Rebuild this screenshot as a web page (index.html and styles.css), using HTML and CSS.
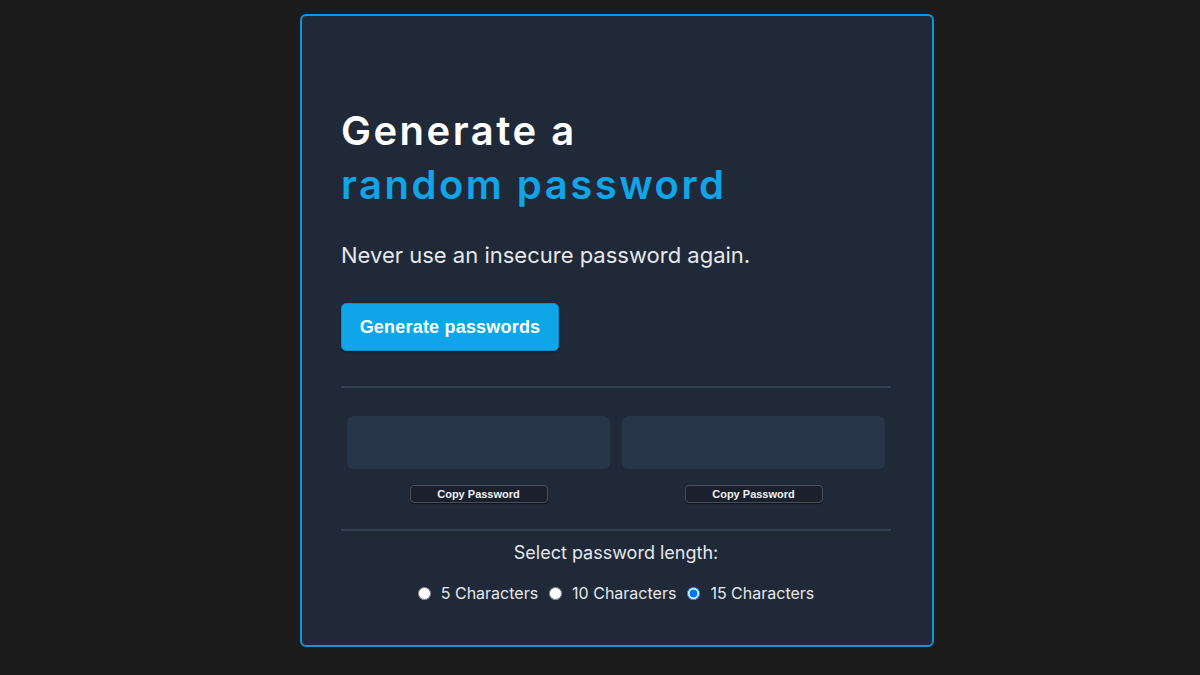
FILE: index.html
```html
<!DOCTYPE html>
<html lang="en">
<head>
    <meta charset="UTF-8">
    <meta name="viewport" content="width=device-width, initial-scale=1.0">
    <title>Password Generator</title>
    <link rel="stylesheet" href="styles.css">
</head>
<body>
    <div class="card">
        <h1 class="title">Generate a<br><span class="accent">random password</span></h1>
        <p class="subtitle">Never use an insecure password again.</p>
        <button class="generate" id="generate">Generate passwords</button>
        <hr class="divider">
        <div class="passwords">
            <div class="slot">
                <div class="pw-box" id="pw1"></div>
                <button class="copy">Copy Password</button>
            </div>
            <div class="slot">
                <div class="pw-box" id="pw2"></div>
                <button class="copy">Copy Password</button>
            </div>
        </div>
        <hr class="divider">
        <div class="length">
            <p class="length-label">Select password length:</p>
            <div class="options">
                <label><input type="radio" name="len" value="5">5 Characters</label>
                <label><input type="radio" name="len" value="10">10 Characters</label>
                <label><input type="radio" name="len" value="15" checked>15 Characters</label>
            </div>
        </div>
    </div>
</body>
</html>
```

FILE: styles.css
```css
*{
    margin: 0;
    padding: 0;
    box-sizing: border-box;
}
body{
    background: #1b1b1b;
    font-family: Inter, "Noto Sans", sans-serif;
}
.card{
    width: 634px;
    height: 633px;
    margin: 14px 0 0 300px;
    padding: 88px 39px 40px 39px;
    background: #1f2937;
    border: 2px solid #0f96d6;
    border-radius: 6px;
}
.title{
    font-size: 40px;
    line-height: 54px;
    font-weight: 600;
    letter-spacing: 2.5px;
    color: #fff;
}
.accent{
    color: #0ea5e9;
}
.subtitle{
    margin-top: 28px;
    font-size: 22px;
    line-height: 30px;
    color: #e5e7eb;
}
.generate{
    margin-top: 33px;
    width: 218px;
    height: 48px;
    background: #0ea5e9;
    color: #fff;
    font: bold 18px "Liberation Sans", Arial, sans-serif;
    letter-spacing: 0.2px;
    border: 1px solid #0c8fcb;
    border-radius: 5px;
    box-shadow: 0 1px 2px rgba(0,0,0,.4);
}
.divider{
    border: 0;
    height: 2px;
    background: #334155;
    width: 550px;
}
.generate + .divider{
    margin-top: 35px;
}
.passwords + .divider{
    margin-top: 26px;
}
.passwords{
    display: grid;
    grid-template-columns: 1fr 1fr;
    gap: 12px;
    width: 550px;
    padding: 0 6px;
    margin-top: 28px;
}
.slot{
    display: flex;
    flex-direction: column;
    align-items: center;
}
.pw-box{
    width: 100%;
    height: 53px;
    background: #273549;
    border-radius: 6px;
}
.copy{
    margin-top: 16px;
    width: 138px;
    height: 18px;
    background: #1a212c;
    color: #eef0f3;
    font: bold 11px "Liberation Sans", Arial, sans-serif;
    border: 1px solid #4b5058;
    border-radius: 4px;
    box-shadow: 0 1px 1px rgba(0,0,0,.5);
}
.length{
    width: 550px;
    text-align: center;
    color: #e5e7eb;
}
.length-label{
    margin-top: 10px;
    font-size: 18px;
    line-height: 24px;
}
.options{
    margin-top: 18px;
    display: flex;
    justify-content: center;
    gap: 11px;
    font-size: 16px;
    line-height: 20px;
}
.options label{
    display: inline-flex;
    align-items: center;
}
.options input{
    margin: 0 10px 0 0;
    width: 13px;
    height: 13px;
}
```
